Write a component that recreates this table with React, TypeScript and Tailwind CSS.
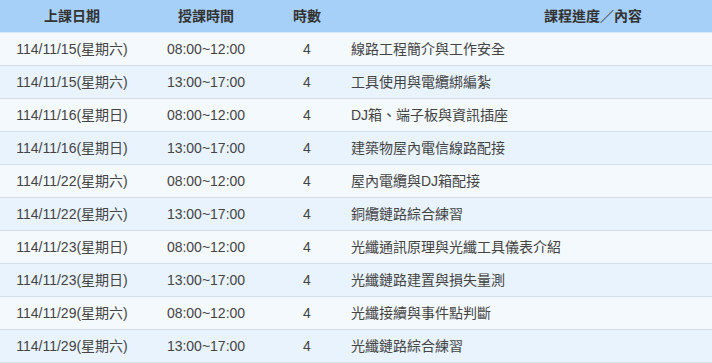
import React from 'react';

const rows = [
  ['114/11/15(星期六)', '08:00~12:00', '4', '線路工程簡介與工作安全'],
  ['114/11/15(星期六)', '13:00~17:00', '4', '工具使用與電纜綁編紮'],
  ['114/11/16(星期日)', '08:00~12:00', '4', 'DJ箱、端子板與資訊插座'],
  ['114/11/16(星期日)', '13:00~17:00', '4', '建築物屋內電信線路配接'],
  ['114/11/22(星期六)', '08:00~12:00', '4', '屋內電纜與DJ箱配接'],
  ['114/11/22(星期六)', '13:00~17:00', '4', '銅纜鏈路綜合練習'],
  ['114/11/23(星期日)', '08:00~12:00', '4', '光纖通訊原理與光纖工具儀表介紹'],
  ['114/11/23(星期日)', '13:00~17:00', '4', '光纖鏈路建置與損失量測'],
  ['114/11/29(星期六)', '08:00~12:00', '4', '光纖接續與事件點判斷'],
  ['114/11/29(星期六)', '13:00~17:00', '4', '光纖鏈路綜合練習'],
];

const cols = 'grid grid-cols-[144px_124px_78px_494px]';

export default function App() {
  return (
    <div
      className="w-[712px] h-[363px] overflow-hidden bg-white"
      style={{ fontFamily: '"Liberation Sans", "Noto Sans CJK TC", sans-serif' }}
    >
      <div className="w-[840px] text-[14px]">
        <div className={`${cols} h-[33px] items-center border-b border-[#dbe9f7] bg-[#a6d0f8] font-bold text-[#333]`}>
          <div className="text-center">上課日期</div>
          <div className="text-center">授課時間</div>
          <div className="text-center">時數</div>
          <div className="text-center">課程進度／內容</div>
        </div>
        {rows.map((r, i) => (
          <div
            key={i}
            className={`${cols} h-[33px] items-center border-b border-[#d5dde6] text-[#444] ${
              i % 2 === 0 ? 'bg-[#f4f9fe]' : 'bg-[#e8f3fe]'
            }`}
          >
            <div className="text-center">{r[0]}</div>
            <div className="text-center">{r[1]}</div>
            <div className="text-center">{r[2]}</div>
            <div className="pl-[5px]">{r[3]}</div>
          </div>
        ))}
      </div>
    </div>
  );
}
